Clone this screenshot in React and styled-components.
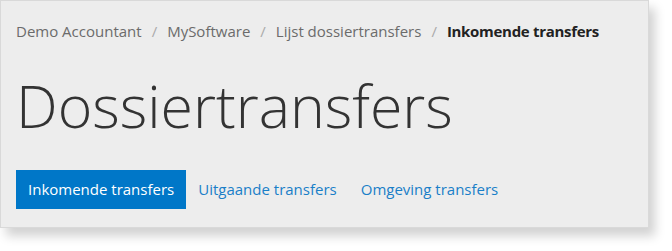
import React from "react";
import styled, { createGlobalStyle } from "styled-components";

const GlobalStyle = createGlobalStyle`
  body {
    margin: 0;
    background: #fff;
    font-family: "Open Sans", "Noto Sans", sans-serif;
  }
`;

const Page = styled.div`
  padding: 0 24px 24px 0;
`;

const Panel = styled.header`
  width: 649px;
  height: 228px;
  box-sizing: border-box;
  background: #ededed;
  border: 1px solid #d9d9d9;
  box-shadow: 6px 8px 10px rgba(0, 0, 0, 0.18);
  padding: 18px 15px 0;
  display: flex;
  flex-direction: column;
`;

const Crumbs = styled.nav`
  display: flex;
  align-items: center;
  font-size: 15px;
  line-height: 24px;
  color: #6b6b6b;
`;

const Crumb = styled.span`
  color: ${({ current }) => (current ? "#222" : "#6b6b6b")};
  font-weight: ${({ current }) => (current ? 700 : 400)};
  letter-spacing: ${({ current }) => (current ? "-0.3px" : "0")};
`;

const Sep = styled.span`
  color: #aaa;
  margin: 0 10px;
`;

const Title = styled.h1`
  margin: 30px 0 0;
  font-size: 59px;
  line-height: 64px;
  font-weight: 300;
  color: #333;
`;

const Tabs = styled.div`
  display: flex;
  margin-top: 33px;
`;

const Tab = styled.a`
  display: block;
  padding: 0 12px;
  height: 39px;
  line-height: 39px;
  font-size: 15px;
  text-decoration: none;
  background: ${({ active }) => (active ? "#0077c8" : "transparent")};
  color: ${({ active }) => (active ? "#fff" : "#1a7fc8")};
`;

const crumbs = ["Demo Accountant", "MySoftware", "Lijst dossiertransfers"];
const tabs = ["Inkomende transfers", "Uitgaande transfers", "Omgeving transfers"];

export default function App() {
  return (
    <Page>
      <GlobalStyle />
      <Panel>
        <Crumbs>
          {crumbs.map((c) => (
            <React.Fragment key={c}>
              <Crumb>{c}</Crumb>
              <Sep>/</Sep>
            </React.Fragment>
          ))}
          <Crumb current>Inkomende transfers</Crumb>
        </Crumbs>
        <Title>Dossiertransfers</Title>
        <Tabs>
          {tabs.map((t, i) => (
            <Tab key={t} active={i === 0}>
              {t}
            </Tab>
          ))}
        </Tabs>
      </Panel>
    </Page>
  );
}
